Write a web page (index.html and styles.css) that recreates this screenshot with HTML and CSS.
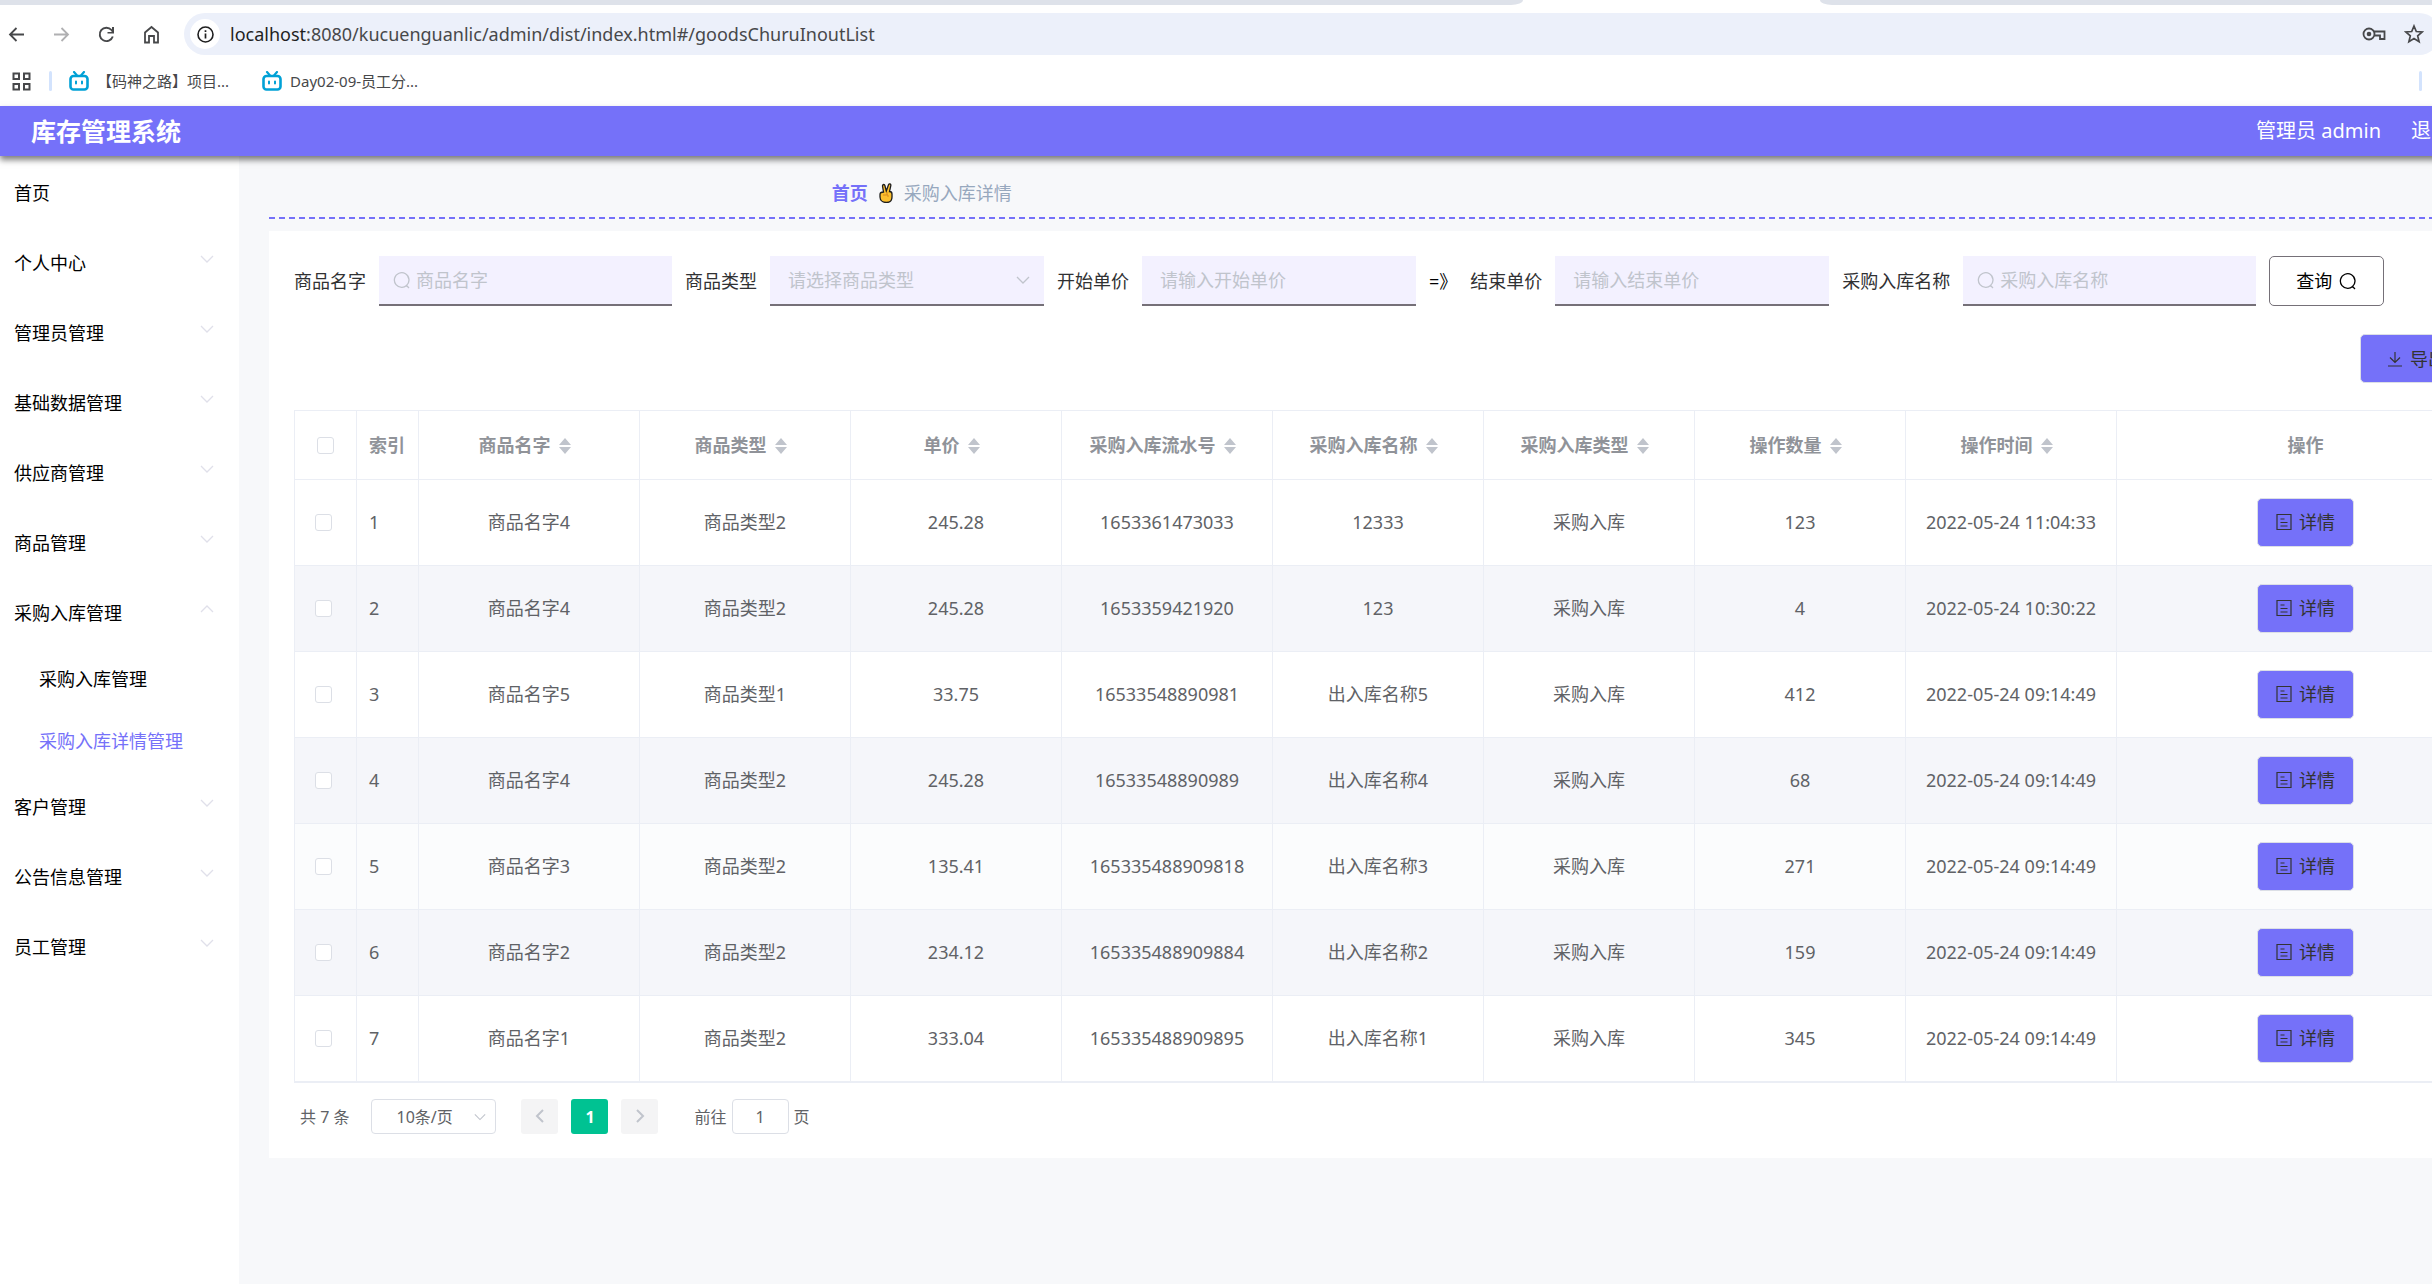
FILE: index.html
```
<!DOCTYPE html>
<html lang="zh-CN">
<head>
  <meta charset="utf-8">
  <title>库存管理系统</title>
  <link rel="stylesheet" href="styles.css">
</head>
<body>
  <!-- shared icons -->
  <svg width="0" height="0" class="defs">
    <symbol id="i-down" viewBox="0 0 14 14"><path d="M1 4l6 6 6-6" fill="none" stroke="currentColor" stroke-width="1.3"/></symbol>
    <symbol id="i-up" viewBox="0 0 14 14"><path d="M1 10l6-6 6 6" fill="none" stroke="currentColor" stroke-width="1.3"/></symbol>
    <symbol id="i-search" viewBox="0 0 18 18"><path d="M13.5 14.500A7.300 7.300 0 1 0 9 16.300c1.700 0 3.200-.600 4.500-1.800l2.500 2.500" fill="none" stroke="currentColor" stroke-width="1.300"/></symbol>
    <symbol id="i-doc" viewBox="0 0 16 18"><path d="M1 1.500h14v15H1zM4.500 6h4M4.500 9.500h7M4.500 13h7" fill="none" stroke="currentColor" stroke-width="1.200"/></symbol>
    <symbol id="i-sort" viewBox="0 0 12 16"><path d="M6 0l6 7H0zM6 16l6-7H0z" fill="currentColor"/></symbol>
    <symbol id="i-bili" viewBox="0 0 20 20"><path d="M5 1l3 3.500M15 1l-3 3.500" fill="none" stroke="#00a1d6" stroke-width="2.200" stroke-linecap="round"/><rect x="1.500" y="5" width="17" height="13.500" rx="3" fill="#fff" stroke="#00a1d6" stroke-width="2.600"/><path d="M7 10.500v2M13 10.500v2" stroke="#00a1d6" stroke-width="2" stroke-linecap="round"/></symbol>
  </svg>

  <div class="app">
    <div class="browser">
      <div class="tabstrip"><span class="tabs-left"></span><span class="tabs-right"></span></div>
      <div class="toolbar">
        <div class="nav-icons">
          <svg width="17" height="17" viewBox="0 0 17 17"><path d="M16 8.500H2M8.500 2L2 8.500 8.500 15" fill="none" stroke="#47484a" stroke-width="1.800"/></svg>
          <svg width="17" height="17" viewBox="0 0 17 17"><path d="M1 8.500h14M8.500 2L15 8.500 8.500 15" fill="none" stroke="#b0b0b2" stroke-width="1.800"/></svg>
          <svg width="17" height="17" viewBox="0 0 17 17"><path d="M14.800 10.500A6.700 6.700 0 1 1 13.500 4l1.500 2" fill="none" stroke="#47484a" stroke-width="1.900"/><path d="M16 1v6.500H9.500V6H14V1z" fill="#47484a"/></svg>
          <svg width="17" height="19" viewBox="0 0 17 19"><path d="M2 17.500V7.500L8.500 2 15 7.500v10h-4V11H6v6.500z" fill="none" stroke="#47484a" stroke-width="1.800"/></svg>
        </div>
        <div class="address">
          <span class="info"><svg width="17" height="17" viewBox="0 0 17 17"><circle cx="8.500" cy="8.500" r="7.500" fill="none" stroke="#1f1f1f" stroke-width="1.600"/><path d="M8.500 7.500v5M8.500 4.300v1.700" stroke="#1f1f1f" stroke-width="1.700"/></svg></span>
          <span class="url"><b>localhost</b>:8080/kucuenguanlic/admin/dist/index.html#/goodsChuruInoutList</span>
          <svg width="24" height="16" viewBox="0 0 24 16"><circle cx="7" cy="8" r="5.500" fill="none" stroke="#47484a" stroke-width="1.800"/><circle cx="7" cy="8" r="2.300" fill="#47484a"/><path d="M12 5.500h10.500v7.500H18V9.500h-5.500" fill="none" stroke="#47484a" stroke-width="1.800"/></svg>
          <svg width="20" height="20" viewBox="0 0 20 20"><path d="M10 2l2.300 5.500 5.900.500-4.500 3.900 1.400 5.800L10 14.600l-5.100 3.100 1.400-5.800L1.800 8l5.900-.500z" fill="none" stroke="#47484a" stroke-width="1.700"/></svg>
        </div>
      </div>
      <div class="bookmarks">
        <svg width="19" height="19" viewBox="0 0 19 19"><path d="M1.500 1.500h5.500v5.500H1.500zM12 1.500h5.500v5.500H12zM1.500 12h5.500v5.500H1.500zM12 12h5.500v5.500H12z" fill="none" stroke="#47484a" stroke-width="2"/></svg>
        <span class="sep"></span>
        <a href="#" class="bookmark"><svg width="20" height="20"><use href="#i-bili"/></svg>【码神之路】项目...</a>
        <a href="#" class="bookmark"><svg width="20" height="20"><use href="#i-bili"/></svg>Day02-09-员工分...</a>
        <span class="sep sep-end"></span>
      </div>
    </div>

    <header class="header">
      <h1>库存管理系统</h1>
      <div class="user">
        <span>管理员 admin</span>
        <a href="#">退出登录</a>
      </div>
    </header>

    <div class="body">
      <nav class="menu">
        <a href="#">首页</a>
        <a href="#">个人中心<svg width="14" height="14"><use href="#i-down"/></svg></a>
        <a href="#">管理员管理<svg width="14" height="14"><use href="#i-down"/></svg></a>
        <a href="#">基础数据管理<svg width="14" height="14"><use href="#i-down"/></svg></a>
        <a href="#">供应商管理<svg width="14" height="14"><use href="#i-down"/></svg></a>
        <a href="#">商品管理<svg width="14" height="14"><use href="#i-down"/></svg></a>
        <a href="#">采购入库管理<svg width="14" height="14"><use href="#i-up"/></svg></a>
        <a href="#" class="sub">采购入库管理</a>
        <a href="#" class="sub active">采购入库详情管理</a>
        <a href="#">客户管理<svg width="14" height="14"><use href="#i-down"/></svg></a>
        <a href="#">公告信息管理<svg width="14" height="14"><use href="#i-down"/></svg></a>
        <a href="#">员工管理<svg width="14" height="14"><use href="#i-down"/></svg></a>
      </nav>

      <main class="main">
        <div class="breadcrumb">
          <a href="#">首页</a>
          <svg width="14" height="20" viewBox="0 0 14 20"><path d="M4.500 9L3.500 3c0-2 2.200-2 2.500 0l1.300 5L9.500 1.800c.700-1.600 2.700-1 2.300.800L10.500 8.500c1.500 0 2.500 1 2.500 2.500v3c0 3.500-2 5.500-5.500 5.500S1 17.500 1 14v-2.500C1 9.500 2.500 9 4.500 9z" fill="#fcbf2e" stroke="#1d1d1d" stroke-width="1.300"/><path d="M4 12h5v2M8 9v3" fill="none" stroke="#d98a1c"/></svg>
          <span>采购入库详情</span>
        </div>

        <section class="card">
          <form class="filters">
            <label for="goodsName">商品名字</label>
            <div class="field wide">
              <svg width="18" height="18"><use href="#i-search"/></svg>
              <input type="text" id="goodsName" placeholder="商品名字">
            </div>
            <label for="goodsType">商品类型</label>
            <div class="field">
              <select id="goodsType"><option>请选择商品类型</option></select>
              <svg width="14" height="14"><use href="#i-down"/></svg>
            </div>
            <label for="priceStart">开始单价</label>
            <div class="field"><input type="text" id="priceStart" placeholder="请输入开始单价"></div>
            <span class="arrow">=》</span>
            <label for="priceEnd">结束单价</label>
            <div class="field"><input type="text" id="priceEnd" placeholder="请输入结束单价"></div>
            <label for="inoutName">采购入库名称</label>
            <div class="field wide">
              <svg width="18" height="18"><use href="#i-search"/></svg>
              <input type="text" id="inoutName" placeholder="采购入库名称">
            </div>
            <button type="button" class="query">查询<svg width="18" height="18"><use href="#i-search"/></svg></button>
          </form>

          <div class="actions">
            <button type="button" class="btn export"><svg width="16" height="16" viewBox="0 0 16 16"><path d="M8 1v10M3 6.500l5 5 5-5M1 15h14" fill="none" stroke="currentColor" stroke-width="1.200"/></svg>导出</button>
          </div>

          <table>
            <colgroup>
              <col class="c-narrow"><col class="c-narrow"><col class="c-name">
              <col><col><col><col><col><col><col>
              <col class="c-op">
            </colgroup>
            <thead>
              <tr>
                <th class="check"><input type="checkbox" aria-label="全选"></th>
                <th class="index">索引</th>
                <th>商品名字<svg><use href="#i-sort"/></svg></th>
                <th>商品类型<svg><use href="#i-sort"/></svg></th>
                <th>单价<svg><use href="#i-sort"/></svg></th>
                <th>采购入库流水号<svg><use href="#i-sort"/></svg></th>
                <th>采购入库名称<svg><use href="#i-sort"/></svg></th>
                <th>采购入库类型<svg><use href="#i-sort"/></svg></th>
                <th>操作数量<svg><use href="#i-sort"/></svg></th>
                <th>操作时间<svg><use href="#i-sort"/></svg></th>
                <th>操作</th>
              </tr>
            </thead>
            <tbody>
              <tr>
                <td class="check"><input type="checkbox" aria-label="选择 1"></td>
                <td class="index">1</td>
                <td>商品名字4</td>
                <td>商品类型2</td>
                <td>245.28</td>
                <td>1653361473033</td>
                <td>12333</td>
                <td>采购入库</td>
                <td>123</td>
                <td>2022-05-24 11:04:33</td>
                <td><button type="button" class="btn"><svg width="16" height="18"><use href="#i-doc"/></svg>详情</button></td>
              </tr>
              <tr>
                <td class="check"><input type="checkbox" aria-label="选择 2"></td>
                <td class="index">2</td>
                <td>商品名字4</td>
                <td>商品类型2</td>
                <td>245.28</td>
                <td>1653359421920</td>
                <td>123</td>
                <td>采购入库</td>
                <td>4</td>
                <td>2022-05-24 10:30:22</td>
                <td><button type="button" class="btn"><svg width="16" height="18"><use href="#i-doc"/></svg>详情</button></td>
              </tr>
              <tr>
                <td class="check"><input type="checkbox" aria-label="选择 3"></td>
                <td class="index">3</td>
                <td>商品名字5</td>
                <td>商品类型1</td>
                <td>33.75</td>
                <td>16533548890981</td>
                <td>出入库名称5</td>
                <td>采购入库</td>
                <td>412</td>
                <td>2022-05-24 09:14:49</td>
                <td><button type="button" class="btn"><svg width="16" height="18"><use href="#i-doc"/></svg>详情</button></td>
              </tr>
              <tr>
                <td class="check"><input type="checkbox" aria-label="选择 4"></td>
                <td class="index">4</td>
                <td>商品名字4</td>
                <td>商品类型2</td>
                <td>245.28</td>
                <td>16533548890989</td>
                <td>出入库名称4</td>
                <td>采购入库</td>
                <td>68</td>
                <td>2022-05-24 09:14:49</td>
                <td><button type="button" class="btn"><svg width="16" height="18"><use href="#i-doc"/></svg>详情</button></td>
              </tr>
              <tr class="fading">
                <td class="check"><input type="checkbox" aria-label="选择 5"></td>
                <td class="index">5</td>
                <td>商品名字3</td>
                <td>商品类型2</td>
                <td>135.41</td>
                <td>165335488909818</td>
                <td>出入库名称3</td>
                <td>采购入库</td>
                <td>271</td>
                <td>2022-05-24 09:14:49</td>
                <td><button type="button" class="btn"><svg width="16" height="18"><use href="#i-doc"/></svg>详情</button></td>
              </tr>
              <tr>
                <td class="check"><input type="checkbox" aria-label="选择 6"></td>
                <td class="index">6</td>
                <td>商品名字2</td>
                <td>商品类型2</td>
                <td>234.12</td>
                <td>165335488909884</td>
                <td>出入库名称2</td>
                <td>采购入库</td>
                <td>159</td>
                <td>2022-05-24 09:14:49</td>
                <td><button type="button" class="btn"><svg width="16" height="18"><use href="#i-doc"/></svg>详情</button></td>
              </tr>
              <tr>
                <td class="check"><input type="checkbox" aria-label="选择 7"></td>
                <td class="index">7</td>
                <td>商品名字1</td>
                <td>商品类型2</td>
                <td>333.04</td>
                <td>165335488909895</td>
                <td>出入库名称1</td>
                <td>采购入库</td>
                <td>345</td>
                <td>2022-05-24 09:14:49</td>
                <td><button type="button" class="btn"><svg width="16" height="18"><use href="#i-doc"/></svg>详情</button></td>
              </tr>
            </tbody>
          </table>

          <div class="pagination">
            <span>共 7 条</span>
            <div class="page-size">
              <select aria-label="每页条数"><option>10条/页</option></select>
              <svg width="12" height="12"><use href="#i-down"/></svg>
            </div>
            <div class="pager">
              <button type="button" aria-label="上一页"><svg width="10" height="14" viewBox="0 0 10 14"><path d="M8 1L2 7l6 6" fill="none" stroke="#c0c4cc" stroke-width="2"/></svg></button>
              <button type="button" class="current">1</button>
              <button type="button" aria-label="下一页"><svg width="10" height="14" viewBox="0 0 10 14"><path d="M2 1l6 6-6 6" fill="none" stroke="#c0c4cc" stroke-width="2"/></svg></button>
            </div>
            <div class="jump">
              <label for="page">前往</label>
              <input type="text" id="page" value="1">
              <span>页</span>
            </div>
          </div>
        </section>
      </main>
    </div>
  </div>
</body>
</html>
```
FILE: styles.css
```
* {
  box-sizing: border-box;
}
body {
  margin: 0;
  overflow: hidden;
  background: #f7f8fa;
  color: #606266;
  font-family: "Noto Sans", "Noto Sans CJK SC", sans-serif;
  font-size: 18px;
  line-height: 24px;
}
input, select, button {
  font: inherit;
  color: inherit;
}
a {
  color: inherit;
  text-decoration: none;
}
svg {
  flex: none;
}
.defs {
  position: absolute;
}
/* the page is wider than the window, the right side runs off */
.app {
  display: flex;
  flex-direction: column;
  width: calc(100% + 128px);
  min-height: 100vh;
}

/* browser bar */
.browser {
  background: #fff;
}
.tabstrip {
  display: flex;
  justify-content: space-between;
  height: 5px;
}
.tabs-left {
  width: 1523px;
  background: #dee2ea;
  border-bottom-right-radius: 12px 5px;
}
.tabs-right {
  width: 740px;
  background: #dee2ea;
  border-bottom-left-radius: 12px 5px;
}
.toolbar {
  display: flex;
  align-items: center;
  padding: 8px 120px 8px 8px;
}
.nav-icons {
  display: flex;
  align-items: center;
  gap: 28px;
  margin-right: 24px;
}
.address {
  display: flex;
  flex: 1;
  align-items: center;
  gap: 18px;
  height: 42px;
  padding: 0 16px 0 6px;
  border-radius: 21px;
  background: #ecf0fa;
  color: #47484a;
}
.info {
  display: flex;
  align-items: center;
  justify-content: center;
  width: 30px;
  height: 30px;
  border-radius: 50%;
  background: #fff;
}
.url {
  flex: 1;
  margin-left: -8px;
}
.url b {
  font-weight: normal;
  color: #1f1f1f;
}
.bookmarks {
  display: flex;
  align-items: center;
  height: 43px;
  padding: 0 138px 7px 12px;
  color: #47484a;
  font-size: 15px;
}
.bookmark {
  display: flex;
  align-items: center;
  gap: 8px;
  margin-right: 33px;
}
.sep {
  width: 3px;
  height: 20px;
  margin: 0 17px 0 18px;
  border-radius: 2px;
  background: #d3e3fd;
}
.sep-end {
  margin: 0 0 0 auto;
}

/* header */
.header {
  position: relative;
  display: flex;
  align-items: center;
  justify-content: space-between;
  height: 50px;
  padding: 0 69px 0 31px;
  background: #7571f9;
  box-shadow: 0 4px 6px rgba(0, 0, 0, 0.5);
  color: #fff;
}
.header h1 {
  margin: 0;
  font-size: 25px;
}
.user {
  display: flex;
  gap: 30px;
  font-size: 20px;
}

/* side menu */
.body {
  display: flex;
  flex: 1;
}
.menu {
  width: 239px;
  padding-top: 2px;
  background: #fff;
  color: #000;
}
.menu a {
  display: flex;
  align-items: center;
  justify-content: space-between;
  height: 70px;
  padding: 0 25px 0 14px;
}
.menu svg {
  margin-bottom: 8px;
  color: #e0e0ea;
}
.menu .sub {
  height: 62px;
  padding-left: 39px;
}
.menu .active {
  color: #7571f9;
}

/* content */
.main {
  flex: 1;
  padding: 0 40px 0 30px;
}
.breadcrumb {
  display: flex;
  align-items: center;
  gap: 11px;
  height: 63px;
  margin-bottom: 12px;
  padding: 12px 0 2px 25%;
  background: repeating-linear-gradient(90deg, #7571f9 0, #7571f9 6px, transparent 6px, transparent 10px) left bottom / 100% 2px no-repeat;
  color: #97a8be;
}
.breadcrumb a {
  color: #7571f9;
  font-weight: bold;
}
.card {
  padding: 25px 25px 24px;
  background: #fff;
}
.filters {
  display: flex;
  align-items: center;
  gap: 13px;
  color: #303133;
}
.field {
  position: relative;
  display: flex;
  align-items: center;
  gap: 5px;
  width: 274px;
  height: 50px;
  padding: 0 14px;
  border-bottom: 2px solid #757078;
  background: #f3f1ff;
  color: #c0c4cc;
}
.field.wide {
  width: 293px;
}
.field input, .field select {
  flex: 1;
  min-width: 0;
  height: 48px;
  padding: 0 4px;
  border: 0;
  outline: 0;
  background: none;
  appearance: none;
}
.field.wide input {
  padding: 0;
}
.field input::placeholder {
  color: #c0c4cc;
}
.arrow {
  color: #000;
}
.query {
  display: flex;
  align-items: center;
  justify-content: center;
  gap: 7px;
  width: 115px;
  height: 50px;
  border: 1px solid #757078;
  border-radius: 5px;
  background: #fff;
  color: #000;
}
.actions {
  display: flex;
  justify-content: flex-end;
  padding: 28px 20px 27px 0;
}
.btn {
  display: inline-flex;
  align-items: center;
  gap: 7px;
  height: 49px;
  padding: 0 18px;
  border: 1px solid #dcdfe6;
  border-radius: 5px;
  background: #7571f9;
  color: #333;
}
.btn.export {
  padding: 0 28px 0 26px;
}

table {
  width: 100%;
  table-layout: fixed;
  border-spacing: 0;
  border: 1px solid #ebeef5;
  border-right: 0;
}
col {
  width: 211px;
}
.c-narrow {
  width: 62px;
}
.c-name {
  width: 221px;
}
.c-op {
  width: auto;
}
th, td {
  padding: 0 12px 1px;
  border-right: 1px solid #ebeef5;
  border-bottom: 1px solid #ebeef5;
  text-align: center;
  white-space: nowrap;
}
th {
  height: 69px;
  color: #909399;
}
th svg {
  width: 12px;
  height: 16px;
  margin: 0 9px 0 8px;
  vertical-align: -2px;
  color: #c0c4cc;
}
td {
  height: 86px;
}
.index {
  text-align: left;
}
.check {
  padding: 0;
}
td.check {
  padding-right: 4px;
}
.check input {
  display: block;
  width: 17px;
  height: 17px;
  margin: 0 auto;
  border: 1px solid #dcdfe6;
  border-radius: 3px;
  background: #fff;
  appearance: none;
}
tbody tr:nth-child(even) {
  background: #f5f6fa;
}
tbody .fading {
  background: #fbfcfd;
}

/* pagination */
.pagination {
  display: flex;
  align-items: center;
  padding: 16px 6px 0;
  font-size: 16px;
}
.page-size {
  position: relative;
  width: 125px;
  margin: 0 25px 0 22px;
}
.page-size select {
  width: 100%;
  height: 35px;
  padding: 0 24px;
  border: 1px solid #dcdfe6;
  border-radius: 4px;
  background: #fff;
  appearance: none;
}
.page-size svg {
  position: absolute;
  top: 12px;
  right: 10px;
  color: #c0c4cc;
}
.pager {
  display: flex;
  gap: 13px;
}
.pager button {
  width: 37px;
  height: 35px;
  padding: 0;
  border: 0;
  border-radius: 3px;
  background: #f4f4f5;
}
.pager .current {
  background: #00c292;
  color: #fff;
  font-weight: bold;
}
.jump {
  display: flex;
  align-items: center;
  gap: 5px;
  margin-left: 36px;
}
.jump input {
  width: 57px;
  height: 35px;
  border: 1px solid #dcdfe6;
  border-radius: 4px;
  text-align: center;
}
```
